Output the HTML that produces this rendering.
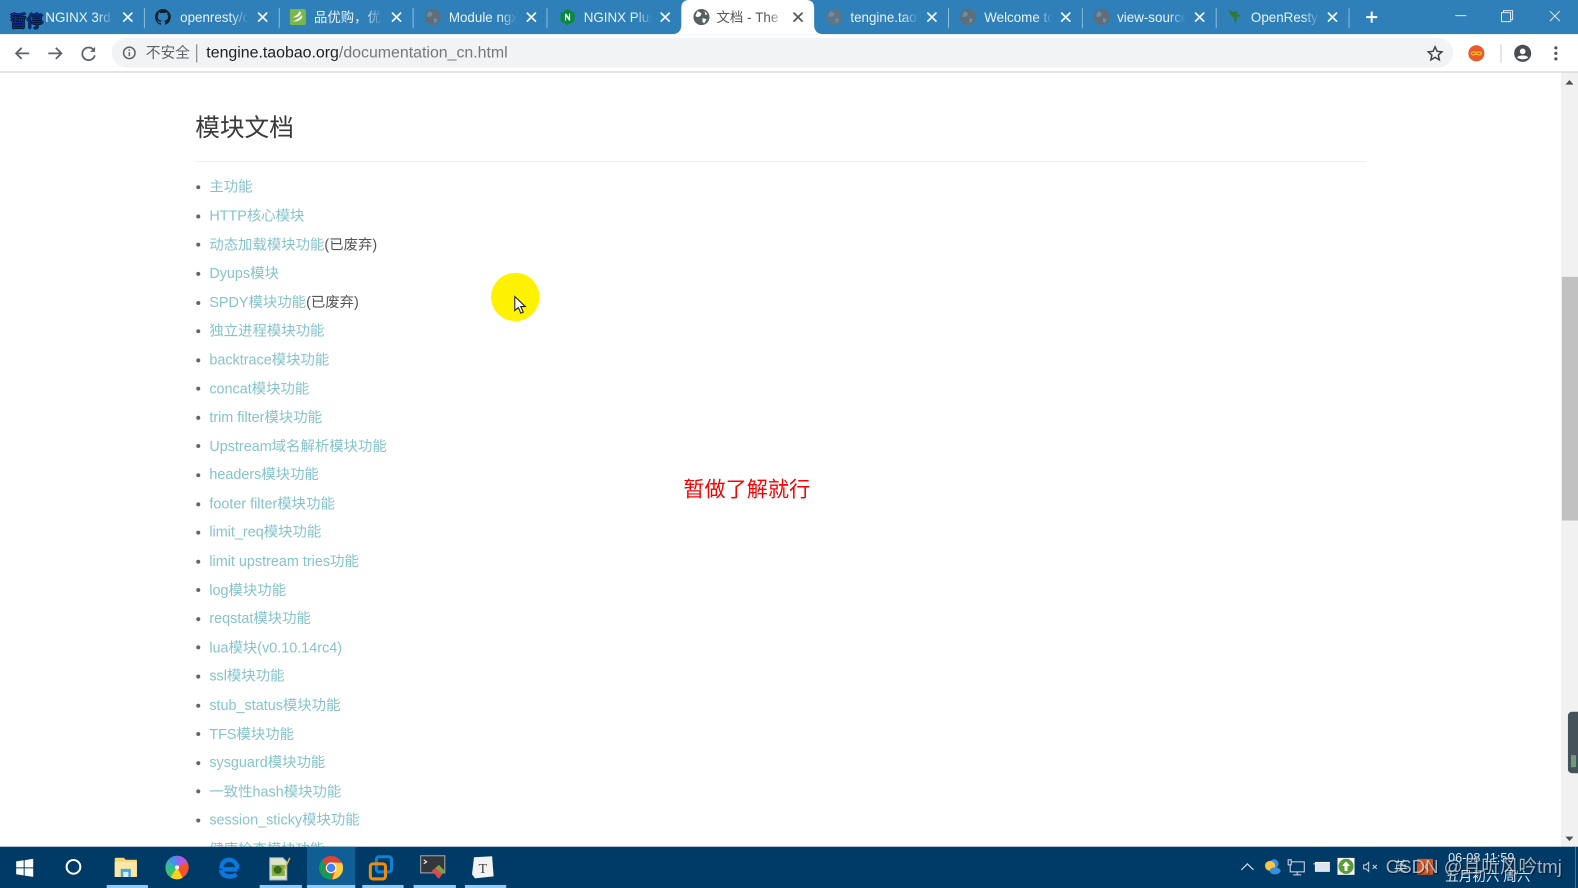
<!DOCTYPE html>
<html lang="zh"><head><meta charset="utf-8"><title>文档 - The Tengine Web Server</title>
<style>
html,body{margin:0;padding:0;background:#fff;overflow:hidden;width:1578px;height:888px}
#w{position:absolute;left:0;top:0;width:1568px;height:882px;transform-origin:0 0;transform:scale(1.00638,1.0068);font-family:"Liberation Sans","Noto Sans CJK SC",sans-serif;overflow:hidden;background:#fff;filter:blur(.35px)}
.a{position:absolute}
.tabbar{left:0;top:0;width:1568px;height:34px;background:#2f80b8}
.t{position:absolute;top:9px;font-size:13.3px;line-height:17px;color:#e8f2f9;white-space:nowrap;overflow:hidden;-webkit-mask-image:linear-gradient(90deg,#000 75%,transparent);mask-image:linear-gradient(90deg,#000 75%,transparent)}
.sep{position:absolute;top:8px;width:1px;height:20px;background:#8dbcdc}
.fav{position:absolute;top:9px;width:16px;height:16px}
.li{position:absolute;left:208px;font-size:14.3px;line-height:20px;color:#555;white-space:nowrap}
.li b{font-weight:normal;color:#84c4cc}
.dot{position:absolute;left:195px;width:4px;height:4px;border-radius:50%;background:#666}
.ul{position:absolute;top:879px;height:3px;background:#8fcbf2}
</style></head><body><div id="w">

<div class="a tabbar"></div>
<!-- active tab -->
<svg class="a" style="left:668px;top:0" width="150" height="35"><path d="M0 34q8 0 9-8V8q0-8 8-8h116q8 0 8 8v18q1 8 9 8z" fill="#fff"/></svg>
<div class="a" style="left:0;top:34px;width:1568px;height:38px;background:#fff"></div>
<div class="a" style="left:0;top:71px;width:1568px;height:1px;background:#ccc"></div>

<div class="sep" style="left:143px"></div><div class="sep" style="left:277px"></div><div class="sep" style="left:410px"></div><div class="sep" style="left:543px"></div><div class="sep" style="left:942px"></div><div class="sep" style="left:1075px"></div><div class="sep" style="left:1208px"></div><div class="sep" style="left:1340px"></div>

<!-- tab titles -->
<div class="t" style="left:45px;width:68px">NGINX 3rd Party</div>
<div class="t" style="left:179px;width:68px">openresty/openresty</div>
<div class="t" style="left:312px;width:68px">品优购，优质商品</div>
<div class="t" style="left:446px;width:68px">Module ngx_http</div>
<div class="t" style="left:580px;width:68px">NGINX Plus Docs</div>
<div class="t" style="left:712px;width:68px;color:#555">文档 - The Tengine</div>
<div class="t" style="left:845px;width:68px">tengine.taobao</div>
<div class="t" style="left:978px;width:68px">Welcome to</div>
<div class="t" style="left:1110px;width:68px">view-source:http</div>
<div class="t" style="left:1243px;width:68px">OpenResty官网</div>

<!-- close icons -->
<svg class="a" style="left:0;top:0" width="1400" height="34" fill="none" stroke="#f0f6fa" stroke-width="1.700" stroke-linecap="round">
<path d="M123 13l8 8m0-8l-8 8M257 13l8 8m0-8l-8 8M390 13l8 8m0-8l-8 8M524 13l8 8m0-8l-8 8M657 13l8 8m0-8l-8 8M922 13l8 8m0-8l-8 8M1055 13l8 8m0-8l-8 8M1188 13l8 8m0-8l-8 8M1320 13l8 8m0-8l-8 8"/>
<path d="M789 13l8 8m0-8l-8 8" stroke="#555"/>
<path d="M1363 11.500v11M1357.500 17h11" stroke="#fff" stroke-width="2" stroke-linecap="butt"/>
</svg>

<!-- favicons -->
<svg class="fav" style="left:154px" viewBox="0 0 16 16"><path fill="#10202c" d="M8 0a8 8 0 0 0-2.500 15.600c.4.100.5-.2.500-.4v-1.400c-2.200.5-2.700-1-2.700-1-.4-.9-.9-1.200-.9-1.200-.7-.5.100-.5.100-.5.800.1 1.200.8 1.200.8.700 1.200 1.900.9 2.300.7.100-.5.300-.9.500-1.100-1.800-.2-3.700-.9-3.700-4 0-.9.300-1.600.8-2.100-.1-.2-.4-1 .1-2.100 0 0 .7-.2 2.200.8a7.500 7.500 0 0 1 4 0c1.500-1 2.200-.8 2.200-.8.400 1.100.2 1.900.1 2.100.5.600.8 1.300.8 2.100 0 3.100-1.900 3.700-3.700 3.900.3.300.6.800.6 1.500v2.200c0 .2.100.5.600.4A8 8 0 0 0 8 0z"/></svg>
<svg class="fav" style="left:288px" viewBox="0 0 16 16"><rect width="16" height="16" rx="2" fill="#79b74a"/><path d="M3 8q4-1 7-6 2 2 0 4-3 3-7 2zM3 12q5-1 9-6 1 2-1 4-4 3-8 2z" fill="#fff"/></svg>
<svg class="fav" style="left:422px" viewBox="0 0 16 16"><circle cx="8" cy="8" r="8" fill="#5f6d78"/><path d="M4 2l4 2-1 3-3 1-2-1zM9 9l4 1-2 4-2-1z" fill="#6e8ca4"/></svg>
<svg class="fav" style="left:556px" viewBox="0 0 16 16"><path d="M8 0l7 4v8l-7 4-7-4V4z" fill="#0a8a3c"/><path d="M5.500 11.500v-7h1l3 4v-4h1v7h-1l-3-4v4z" fill="#fff"/></svg>
<svg class="fav" style="left:689px" viewBox="0 0 16 16"><circle cx="8" cy="8" r="8" fill="#5a5f63"/><path d="M4 2l4 2-1 3-3 1-2-1zM9 9l4 1-2 4-2-1zM11 2l3 3-2 1z" fill="#fff"/></svg>
<svg class="fav" style="left:821px" viewBox="0 0 16 16"><circle cx="8" cy="8" r="8" fill="#5f7484"/><path d="M4 2l4 2-1 3-3 1-2-1zM9 9l4 1-2 4-2-1z" fill="#6e8ca4"/></svg>
<svg class="fav" style="left:954px" viewBox="0 0 16 16"><circle cx="8" cy="8" r="8" fill="#5f6d78"/><path d="M4 2l4 2-1 3-3 1-2-1zM9 9l4 1-2 4-2-1z" fill="#6e8ca4"/></svg>
<svg class="fav" style="left:1087px" viewBox="0 0 16 16"><circle cx="8" cy="8" r="8" fill="#5f6d78"/><path d="M4 2l4 2-1 3-3 1-2-1zM9 9l4 1-2 4-2-1z" fill="#6e8ca4"/></svg>
<svg class="fav" style="left:1220px" viewBox="0 0 16 16"><path d="M0 0l6 3 4-1-1 3 5 2-5 1-1 8-2-7-3-3z" fill="#2f7a3a"/></svg>

<!-- pause label -->
<div class="a" style="left:10px;top:11px;font-size:16.500px;line-height:20px;color:#0b2f9a;white-space:nowrap;text-shadow:-1px 0 #021a3a,1px 0 #021a3a,0 -1px #021a3a,0 1px #021a3a;transform:translateY(1px)">暂停</div>

<!-- window controls -->
<svg class="a" style="left:1440px;top:5px" width="120" height="22" fill="none" stroke="#dceaf4" stroke-width="1">
<path d="M6 10.500h11"/><path d="M52 7.500h9v9h-9zM54 7.500v-2h9v9h-2"/><path d="M100 6l10 10m0-10l-10 10"/>
</svg>

<!-- toolbar -->
<svg class="a" style="left:10px;top:40px" width="100" height="26" fill="none" stroke="#5f6368" stroke-width="1.800">
<path d="M19 13H6M11.500 7.500L6 13l5.500 5.500"/>
<path d="M38 13h13M45.500 7.500L51 13l-5.500 5.500"/>
<path d="M83 9.500a6.300 6.300 0 1 0 1.200 5.500"/><path d="M84.500 6.500v5h-5z" fill="#5f6368" stroke="none"/>
</svg>
<div class="a" style="left:111px;top:38px;width:1333px;height:29px;border-radius:15px;background:#f1f3f4"></div>
<svg class="a" style="left:121px;top:45px" width="15" height="15" fill="none" stroke="#5f6368" stroke-width="1.500"><circle cx="7.500" cy="7.500" r="5.700"/><path d="M7.500 6.800v4M7.500 4v1.500"/></svg>
<div class="a" style="left:145px;top:43px;font-size:14.600px;line-height:20px;color:#5f6368;white-space:nowrap">不安全</div>
<div class="a" style="left:195px;top:44px;width:1px;height:18px;background:#777"></div>
<div class="a" style="left:205px;top:43px;font-size:15.800px;line-height:20px;color:#777;white-space:nowrap"><span style="color:#202124">tengine.taobao.org</span>/documentation_cn.html</div>
<svg class="a" style="left:1417px;top:44px" width="18" height="18" viewBox="0 0 18 18" fill="none" stroke="#444" stroke-width="1.500"><path d="M9 2.500l2 4.500 4.800.5-3.600 3.200 1 4.800L9 13l-4.200 2.500 1-4.800L2.200 7.500 7 7z"/></svg>
<svg class="a" style="left:1458px;top:44px" width="18" height="18" fill="none"><circle cx="9" cy="9" r="8" fill="#ea5a2a"/><path d="M9 9c-1-2-5-2-5 0s4 2 5 0c1-2 5-2 5 0s-4 2-5 0z" stroke="#f5b82e" stroke-width="1.300"/></svg>
<div class="a" style="left:1491px;top:44px;width:1px;height:18px;background:#ccc"></div>
<svg class="a" style="left:1504px;top:44px" width="18" height="18" viewBox="0 0 18 18"><circle cx="9" cy="9" r="8.500" fill="#4a4e52"/><circle cx="9" cy="7" r="2.800" fill="#fff"/><path d="M3.500 13c1.500-2.500 9.500-2.500 11 0-2 2.500-9 2.500-11 0z" fill="#fff"/></svg>
<svg class="a" style="left:1542px;top:45px" width="8" height="16" fill="#555"><circle cx="4" cy="2.500" r="1.600"/><circle cx="4" cy="8" r="1.600"/><circle cx="4" cy="13.500" r="1.600"/></svg>

<!-- page -->
<div class="a" style="left:194px;top:110px;font-size:24.500px;line-height:36px;color:#3a3a3a;white-space:nowrap">模块文档</div>
<div class="a" style="left:194px;top:160px;width:1164px;height:1px;background:#eee"></div>

<div class="dot" style="top:184px"></div><div class="li" style="top:176px"><b>主功能</b></div>
<div class="dot" style="top:213px"></div><div class="li" style="top:205px"><b>HTTP核心模块</b></div>
<div class="dot" style="top:241px"></div><div class="li" style="top:233.500px"><b>动态加载模块功能</b>(已废弃)</div>
<div class="dot" style="top:270px"></div><div class="li" style="top:262px"><b>Dyups模块</b></div>
<div class="dot" style="top:299px"></div><div class="li" style="top:290.500px"><b>SPDY模块功能</b>(已废弃)</div>
<div class="dot" style="top:327px"></div><div class="li" style="top:319px"><b>独立进程模块功能</b></div>
<div class="dot" style="top:356px"></div><div class="li" style="top:348px"><b>backtrace模块功能</b></div>
<div class="dot" style="top:384px"></div><div class="li" style="top:376.500px"><b>concat模块功能</b></div>
<div class="dot" style="top:413px"></div><div class="li" style="top:405px"><b>trim filter模块功能</b></div>
<div class="dot" style="top:441px"></div><div class="li" style="top:433.500px"><b>Upstream域名解析模块功能</b></div>
<div class="dot" style="top:470px"></div><div class="li" style="top:462px"><b>headers模块功能</b></div>
<div class="dot" style="top:499px"></div><div class="li" style="top:490.500px"><b>footer filter模块功能</b></div>
<div class="dot" style="top:527px"></div><div class="li" style="top:519px"><b>limit_req模块功能</b></div>
<div class="dot" style="top:556px"></div><div class="li" style="top:548px"><b>limit upstream tries功能</b></div>
<div class="dot" style="top:584px"></div><div class="li" style="top:576.500px"><b>log模块功能</b></div>
<div class="dot" style="top:613px"></div><div class="li" style="top:605px"><b>reqstat模块功能</b></div>
<div class="dot" style="top:641px"></div><div class="li" style="top:633.500px"><b>lua模块(v0.10.14rc4)</b></div>
<div class="dot" style="top:670px"></div><div class="li" style="top:662px"><b>ssl模块功能</b></div>
<div class="dot" style="top:699px"></div><div class="li" style="top:691px"><b>stub_status模块功能</b></div>
<div class="dot" style="top:727px"></div><div class="li" style="top:719.500px"><b>TFS模块功能</b></div>
<div class="dot" style="top:756px"></div><div class="li" style="top:748px"><b>sysguard模块功能</b></div>
<div class="dot" style="top:784px"></div><div class="li" style="top:776.500px"><b>一致性hash模块功能</b></div>
<div class="dot" style="top:813px"></div><div class="li" style="top:805px"><b>session_sticky模块功能</b></div>
<div class="li" style="top:833.500px"><b>健康检查模块功能</b></div>

<div class="a" style="left:679px;top:473px;font-size:21px;line-height:28px;color:#f00;white-space:nowrap">暂做了解就行</div>

<!-- highlight + cursor -->
<div class="a" style="left:488px;top:271px;width:48px;height:48px;border-radius:50%;background:#fff200"></div>
<svg class="a" style="left:510px;top:293px" width="14" height="20" viewBox="0 0 14 20"><path d="M1.500 1.500v14l3.500-3 2.500 5.500 2.500-1-2.500-5.500h4.500z" fill="#fff" stroke="#222" stroke-width="1.100"/></svg>

<!-- scrollbar -->
<div class="a" style="left:1551px;top:72px;width:17px;height:769px;background:#f1f1f1"></div>
<div class="a" style="left:1552px;top:275px;width:16px;height:242px;background:#c1c1c1"></div>
<svg class="a" style="left:1551px;top:76px" width="17" height="12" fill="#505050"><path d="M8.500 3.500l4 4.500h-8z"/></svg>
<svg class="a" style="left:1551px;top:827px" width="17" height="12" fill="#505050"><path d="M4.500 4h8l-4 4.500z"/></svg>
<div class="a" style="left:1558px;top:707px;width:12px;height:61px;border-radius:4px 0 0 4px;background:#46525a"></div>
<div class="a" style="left:1561px;top:750px;width:5px;height:12px;background:#6f9a7c"></div>

<!-- taskbar -->
<div class="a" style="left:0;top:841px;width:1568px;height:41px;background:#003a66"></div>
<div class="a" style="left:305px;top:841px;width:48px;height:41px;background:#0f5f96"></div>
<div class="ul" style="left:106px;width:41px"></div><div class="ul" style="left:258px;width:42px"></div><div class="ul" style="left:305px;width:48px"></div><div class="ul" style="left:360px;width:41px"></div><div class="ul" style="left:411px;width:42px"></div><div class="ul" style="left:462px;width:41px"></div>

<svg class="a" style="left:16px;top:853px" width="18" height="18" fill="#fff"><path d="M0 2.600L7.500 1.500v7H0zM8.500 1.400L17 0v8.500H8.500zM0 9.500h7.500v7L0 15.400zM8.500 9.500H17V18l-8.500-1.300z"/></svg>
<svg class="a" style="left:64px;top:852px" width="18" height="18" fill="none" stroke="#fff" stroke-width="2"><circle cx="9" cy="9" r="6.800"/></svg>
<svg class="a" style="left:113px;top:851px" width="25" height="22"><path d="M1 2q0-1 1-1h8l2 2h11v17H1z" fill="#f8d775"/><rect x="1" y="5" width="22" height="15" fill="#fce7a6"/><rect x="7" y="12" width="10" height="8" fill="#46a5dc"/><rect x="9.500" y="15" width="5" height="5" fill="#d8eefa"/></svg>
<svg class="a" style="left:164px;top:849px" width="24" height="25" viewBox="0 0 24 25"><circle cx="12" cy="12.500" r="11.500" fill="#f4532c"/><path d="M12 12.500L12 1a11.500 11.500 0 0 1 10 6z" fill="#b05ae8"/><path d="M12 12.500L12 1a11.500 11.500 0 0 0-9 4.500z" fill="#4a8cf0"/><path d="M12 12.500L3 5.500A11.500 11.500 0 0 0 .5 14z" fill="#30b8b0"/><path d="M12 12.500L.5 14a11.500 11.500 0 0 0 5 8.500z" fill="#3cc46c"/><path d="M12 12.500l-6.500 10a11.500 11.500 0 0 0 12 .5z" fill="#ffd21f"/><circle cx="12" cy="12.500" r="2" fill="#fff"/></svg>
<svg class="a" style="left:216px;top:850px" width="22" height="24" viewBox="0 0 22 24" fill="none"><path d="M20 13.500H5.500M4 13C4 7 7.500 4 11.500 4S20 7 20 13M19 18.500C15 21.500 5 22 3.500 14" stroke="#0a78dc" stroke-width="4.400"/></svg>
<svg class="a" style="left:265px;top:851px" width="24" height="24"><path d="M3 1h13l4 4v18H3z" fill="#d9e6c8" stroke="#aab"/><path d="M5 8h13v11H5z" fill="#7fb23c"/><circle cx="11" cy="13" r="4" fill="#3a6a1e"/><path d="M17 14L23 1" stroke="#d8b24a" stroke-width="1.500"/></svg>
<svg class="a" style="left:317px;top:850px" width="24" height="24" viewBox="0 0 24 24"><circle cx="12" cy="12" r="11.500" fill="#db4437"/><path d="M12 12L2 18.500A11.500 11.500 0 0 0 13 23.500z" fill="#0f9d58"/><path d="M12 6.500h10.500A11.500 11.500 0 0 1 13 23.500L17 12z" fill="#ffcd40"/><path d="M12 6.500L2 18.500A11.500 11.500 0 0 1 3.500 4z" fill="#0f9d58"/><path d="M3.500 4A11.500 11.500 0 0 1 22.500 7L12 6.500 7 11z" fill="#db4437"/><circle cx="12" cy="12" r="5.300" fill="#fff"/><circle cx="12" cy="12" r="4.200" fill="#4285f4"/></svg>
<svg class="a" style="left:366px;top:849px" width="25" height="26" fill="none"><rect x="8" y="2" width="15" height="15" rx="2.500" stroke="#0a84d6" stroke-width="3"/><rect x="2" y="9" width="15" height="15" rx="2.500" stroke="#f08c0a" stroke-width="3"/></svg>
<svg class="a" style="left:417px;top:849px" width="26" height="26"><rect x="1" y="1" width="24" height="17" fill="#33363a" stroke="#aaa"/><path d="M4 5l3 2-3 2" stroke="#fff" fill="none"/><path d="M12 16l7-6 6 6-6 8z" fill="#e04848"/><path d="M19 10l6 6-3 3-6-6z" fill="#6aa840"/></svg>
<svg class="a" style="left:468px;top:850px" width="23" height="23"><path d="M3 1.500l18-1 1.500 20-18.500 2-3-4z" fill="#f2f2f2"/><text x="7.500" y="17" font-family="Liberation Serif,serif" font-size="14" fill="#444">T</text></svg>

<!-- tray -->
<svg class="a" style="left:1232px;top:854px" width="15" height="14" fill="none" stroke="#dde" stroke-width="1.200"><path d="M1.500 10L7.500 4l6 6"/></svg>
<svg class="a" style="left:1256px;top:853px" width="17" height="16"><circle cx="10" cy="5" r="4.500" fill="#3a8ee0"/><circle cx="6" cy="7" r="5" fill="#f4c842"/><ellipse cx="11" cy="12" rx="5.500" ry="3.500" fill="#3a8ee0"/></svg>
<svg class="a" style="left:1279px;top:853px" width="18" height="17" fill="none" stroke="#dde" stroke-width="1"><path d="M3 3h14v10H3zM10 13v3M6 16h8"/><rect x="1" y="1" width="3" height="5" fill="#003a66"/></svg>
<svg class="a" style="left:1304px;top:854px" width="18" height="14"><path d="M1 4h2" stroke="#ddd"/><rect x="3" y="2.500" width="14" height="9" fill="#dde6ee" stroke="#fff" stroke-width=".8"/></svg>
<svg class="a" style="left:1329px;top:852px" width="17" height="17"><rect width="17" height="17" fill="#fff"/><circle cx="8.500" cy="8.500" r="7.500" fill="#5d9a3a"/><path d="M8.500 3.500l4 4.500H10v5H7V8H4.500z" fill="#fff"/></svg>
<svg class="a" style="left:1354px;top:854px" width="17" height="14" fill="none" stroke="#c8d4dc" stroke-width="1"><path d="M1 5h2.500L6 2.500v9L3.500 9H1zM10 5l4 4m0-4l-4 4"/></svg>

<div class="a" style="left:1439px;top:845px;font-size:12.500px;line-height:15px;color:#dfe8ee;white-space:nowrap">06-08 11:59</div>
<div class="a" style="left:1436px;top:863px;font-size:13.500px;line-height:16px;color:#dfe8ee;white-space:nowrap">五月初六 周六</div>
<div class="a" style="left:1385px;top:853px;font-size:14px;line-height:17px;color:#c8d4dc;white-space:nowrap">英</div>
<svg class="a" style="left:1408px;top:853px" width="16" height="16"><rect width="16" height="16" rx="1" fill="#d9541e"/><path d="M4 4l8 8M11 4l-6 8" stroke="#f6d8c6"/></svg>
<div class="a" style="left:1377px;top:849px;font-size:18.500px;line-height:24px;color:rgba(226,232,238,.72);white-space:nowrap;text-shadow:1px 1px 1px rgba(0,0,0,.6)">CSDN @且听风吟tmj</div>
<div class="a" style="left:1565px;top:841px;width:1px;height:41px;background:#4c7592"></div>

</div></body></html>
